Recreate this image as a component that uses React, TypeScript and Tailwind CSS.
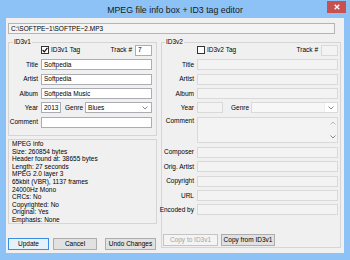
import React from "react";

const font = { fontFamily: '"Liberation Sans", Arial, sans-serif' };

function Box({ w, value, disabled, className = "" }: { w?: string; value?: string; disabled?: boolean; className?: string }) {
  return (
    <div
      className={`h-[11px] flex items-center px-[2px] border overflow-hidden whitespace-nowrap ${
        disabled ? "bg-[#f3f3f3] border-[#d9d9d9]" : "bg-white border-[#abadb3]"
      } ${w ?? "flex-1"} ${className}`}
    >
      {value}
    </div>
  );
}

function Arrow() {
  return (
    <svg width="6" height="4" viewBox="0 0 6 4">
      <path d="M0.5 0.5 L3 3 L5.5 0.5" fill="none" stroke="#7a7a7a" strokeWidth="0.9" />
    </svg>
  );
}

function UpArrow() {
  return (
    <svg width="6" height="4" viewBox="0 0 6 4">
      <path d="M0.5 3.5 L3 1 L5.5 3.5" fill="none" stroke="#b0b0b0" strokeWidth="0.9" />
    </svg>
  );
}

function Check({ checked }: { checked?: boolean }) {
  return (
    <div className="w-[8px] h-[8px] bg-white border border-[#333] flex items-center justify-center">
      {checked && (
        <svg width="6" height="6" viewBox="0 0 6 6">
          <path d="M0.6 3 L2.3 4.8 L5.4 0.8" fill="none" stroke="#111" strokeWidth="1.2" />
        </svg>
      )}
    </div>
  );
}

function Row({ label, labelW, children, h = "h-[14.4px]" }: { label: string; labelW: string; children: React.ReactNode; h?: string }) {
  return (
    <div className={`flex items-center ${h}`}>
      <div className={`${labelW} text-right whitespace-nowrap flex justify-end`}>{label}</div>
      <div className="w-[3px]" />
      {children}
    </div>
  );
}

function Btn({ label, w, def, disabled }: { label: string; w: string; def?: boolean; disabled?: boolean }) {
  return (
    <div
      className={`${w} h-[12px] flex items-center justify-center border ${
        disabled
          ? "bg-[#f4f4f4] border-[#c4c4c4] text-[#a3a3a3]"
          : def
          ? "bg-[#e5f1fb] border-[#3c8fe0]"
          : "bg-[#e1e1e1] border-[#adadad]"
      }`}
    >
      {label}
    </div>
  );
}

export default function App() {
  const info = [
    "MPEG info",
    "Size: 260854 bytes",
    "Header found at: 38655 bytes",
    "Length: 27 seconds",
    "MPEG 2.0 layer 3",
    "65kbit (VBR), 1137 frames",
    "24000Hz Mono",
    "CRCs: No",
    "Copyrighted: No",
    "Original: Yes",
    "Emphasis: None",
  ];
  return (
    <div className="w-[350px] h-[260px] bg-[#8cc2f5] flex flex-col text-[6.5px] leading-[8px] text-black" style={font}>
      {/* title bar */}
      <div className="h-[18px] relative flex items-center justify-center">
        <span className="text-[8.8px] text-[#1a1a1a] mt-[1px]">MPEG file info box + ID3 tag editor</span>
        <div className="absolute right-[4px] top-[1px] w-[19px] h-[12px] bg-[#c75050] flex items-center justify-center">
          <svg width="6" height="6" viewBox="0 0 6 6">
            <path d="M0.7 0.7 L5.3 5.3 M5.3 0.7 L0.7 5.3" stroke="#fff" strokeWidth="1.3" />
          </svg>
        </div>
      </div>
      {/* content */}
      <div className="flex-1 mx-[6px] mb-[7px] bg-[#f0f0f0] flex flex-col pl-[2px]">
        <div className="mt-[5px] w-[327px] h-[11px] border border-[#b5b5b5] bg-[#f4f4f4] flex items-center px-[2px]">
          C:\SOFTPE~1\SOFTPE~2.MP3
        </div>
        <div className="flex mt-[4px] gap-[4px]">
          {/* left column */}
          <div className="w-[149px] flex flex-col">
            <fieldset className="border border-[#d5d5d5] h-[98px] pl-[2px] pr-[4px]">
              <legend className="ml-[2px] px-[1px] leading-[8px]">ID3v1</legend>
              <div className="flex flex-col mt-[-2.8px]">
                <div className="flex items-center h-[14.4px]">
                  <div className="w-[30px]" />
                  <Check checked />
                  <span className="ml-[2px]">ID3v1 Tag</span>
                  <div className="flex-1" />
                  <span>Track #</span>
                  <div className="w-[3px]" />
                  <Box w="w-[17px]" value="7" />
                </div>
                <Row label="Title" labelW="w-[27px]">
                  <Box value="Softpedia" />
                </Row>
                <Row label="Artist" labelW="w-[27px]">
                  <Box value="Softpedia" />
                </Row>
                <Row label="Album" labelW="w-[27px]">
                  <Box value="Softpedia Music" />
                </Row>
                <Row label="Year" labelW="w-[27px]">
                  <Box w="w-[20px]" value="2013" />
                  <span className="ml-[4px] mr-[2px]">Genre</span>
                  <div className="flex-1 h-[11px] bg-white border border-[#abadb3] flex items-center pl-[2px] pr-[3px]">
                    <span className="flex-1">Blues</span>
                    <Arrow />
                  </div>
                </Row>
                <Row label="Comment" labelW="w-[27px]">
                  <Box value="" />
                </Row>
              </div>
            </fieldset>
            <div className="mt-[3px] h-[85px] border border-[#d5d5d5] px-[3px] leading-[7.6px] flex flex-col">
              {info.map((l) => (
                <div key={l} className="whitespace-nowrap">{l}</div>
              ))}
            </div>
            <div className="flex mt-[14px]">
              <Btn label="Update" w="w-[41px]" def />
              <div className="w-[4px]" />
              <Btn label="Cancel" w="w-[44px]" />
              <div className="w-[8px]" />
              <Btn label="Undo Changes" w="w-[51px]" />
            </div>
          </div>
          {/* right column */}
          <div className="w-[180px] flex flex-col">
            <fieldset className="border border-[#d5d5d5] pr-[2px] pb-[1px]">
              <legend className="ml-[3px] px-[1px] leading-[8px]">ID3v2</legend>
              <div className="flex flex-col mt-[-2.8px]">
                <div className="flex items-center h-[14.4px]">
                  <div className="w-[35px]" />
                  <Check />
                  <span className="ml-[2px]">ID3v2 Tag</span>
                  <div className="flex-1" />
                  <span>Track #</span>
                  <div className="w-[3px]" />
                  <Box w="w-[17px]" disabled />
                </div>
                <Row label="Title" labelW="w-[32px]">
                  <Box disabled />
                </Row>
                <Row label="Artist" labelW="w-[32px]">
                  <Box disabled />
                </Row>
                <Row label="Album" labelW="w-[32px]">
                  <Box disabled />
                </Row>
                <Row label="Year" labelW="w-[32px]">
                  <Box w="w-[26px]" disabled />
                  <span className="ml-[8px] mr-[2px]">Genre</span>
                  <div className="flex-1 h-[11px] bg-white border border-[#d9d9d9] flex items-center justify-end pr-[3px]">
                    <div className="flex-1 h-full bg-[#f7f7f7] mr-[3px] border-r border-[#eeeeee]" />
                    <Arrow />
                  </div>
                </Row>
                <div className="flex h-[30px] pt-[1.5px]">
                  <div className="w-[32px] text-right whitespace-nowrap flex justify-end">Comment</div>
                  <div className="w-[3px]" />
                  <div className="flex-1 h-[26px] border border-[#d9d9d9] bg-[#f3f3f3] flex justify-end">
                    <div className="w-[9px] flex flex-col justify-between items-center py-[3px]">
                      <UpArrow />
                      <Arrow />
                    </div>
                  </div>
                </div>
                <Row label="Composer" labelW="w-[32px]">
                  <Box disabled />
                </Row>
                <Row label="Orig. Artist" labelW="w-[32px]">
                  <Box disabled />
                </Row>
                <Row label="Copyright" labelW="w-[32px]">
                  <Box disabled />
                </Row>
                <Row label="URL" labelW="w-[32px]">
                  <Box disabled />
                </Row>
                <Row label="Encoded by" labelW="w-[32px]">
                  <Box disabled />
                </Row>
              </div>
              <div className="flex pl-[1px] mt-[17px]">
                <Btn label="Copy to ID3v1" w="w-[55px]" disabled />
                <div className="w-[3px]" />
                <Btn label="Copy from ID3v1" w="w-[54px]" />
              </div>
            </fieldset>
          </div>
        </div>
      </div>
    </div>
  );
}
